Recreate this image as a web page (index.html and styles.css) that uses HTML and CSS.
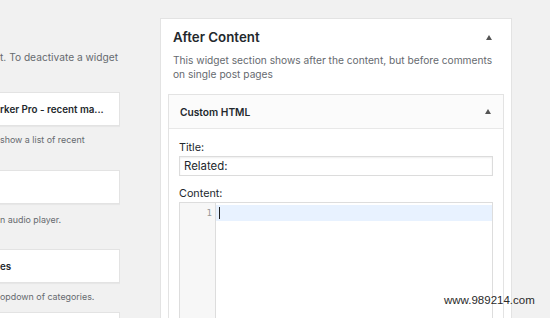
FILE: index.html
```html
<!DOCTYPE html>
<html>
<head>
  <meta charset="UTF-8">
  <title>Widgets</title>
  <link rel="stylesheet" href="styles.css">
</head>
<body>

  <div class="available">
    <p class="help">t. To deactivate a widget</p>

    <div class="widget first"><span>rker Pro - recent ma...</span></div>
    <p class="desc">show a list of recent</p>

    <div class="widget second"><span></span></div>
    <p class="desc d2">n audio player.</p>

    <div class="widget third"><span>es</span></div>
    <p class="desc">opdown of categories.</p>

    <div class="widget fourth"><span></span></div>
  </div>

  <div class="sidebar">
    <div class="sidebar-head">
      <h2>After Content</h2>
      <span class="toggle"></span>
    </div>
    <p class="sidebar-desc">
      <span>This widget section shows after the content, but before comments</span>
      <span>on single post pages</span>
    </p>

    <div class="box">
      <div class="box-head">
        <h3>Custom HTML</h3>
        <span class="toggle"></span>
      </div>
      <div class="box-body">
        <label class="field-label">Title:</label>
        <div class="input">Related:</div>

        <label class="field-label content-label">Content:</label>
        <div class="editor">
          <div class="gutter"><div class="num">1</div></div>
          <div class="code">
            <div class="line active"><span class="cursor"></span></div>
          </div>
        </div>
      </div>
    </div>
  </div>

  <div class="mark">www.989214.com</div>

</body>
</html>
```

FILE: styles.css
```css
* {
  box-sizing: border-box;
}

body {
  background-color: #f1f1f1;
  font-family: 'Inter', 'Liberation Sans', sans-serif;
  color: #23282d;
  margin: 0;
  padding: 0;
  display: flex;
  height: 318px;
  overflow: hidden;
}

/* left column - available widgets, cut off */
.available {
  width: 120px;
  flex: none;
  overflow: hidden;
  padding-top: 49px;
}

.help,
.desc {
  margin: 0;
  line-height: 16px;
  color: #666a6f;
  white-space: nowrap;
}

.help {
  font-size: 10.2px;
}

.desc {
  font-size: 8.9px;
  margin-top: 6px;
}

.d2 { margin-top: 8px; }

.widget {
  height: 34px;
  background-color: white;
  border: 1px solid #e3e3e3;
  border-left: none;
  box-shadow: 0 1px 1px rgba(0,0,0,0.04);
  display: flex;
  align-items: center;
  font-size: 9.8px;
  font-weight: 600;
  white-space: nowrap;
}

.first { margin-top: 27px; }
.second { margin-top: 22px; }
.third { margin-top: 21px; }
.fourth { margin-top: 7px; }

/* right column - sidebar */
.sidebar {
  width: 352px;
  flex: none;
  margin-left: 40px;
  margin-top: 18px;
  background-color: white;
  border: 1px solid #e3e3e3;
  border-bottom: none;
  padding: 8px 7px 0;
}

.sidebar-head {
  display: flex;
  justify-content: space-between;
  align-items: center;
  padding: 0 12px 0 5px;
}

.sidebar-head h2 {
  margin: 0;
  font-size: 13.3px;
  font-weight: 600;
  line-height: 20px;
}

.toggle {
  width: 0;
  height: 0;
  border-left: 3.5px solid transparent;
  border-right: 3.5px solid transparent;
  border-bottom: 5px solid #555;
}

.sidebar-desc {
  margin: 6px 0 0;
  padding: 0 5px;
  font-size: 10.2px;
  line-height: 14px;
  color: #666a6f;
}

.sidebar-desc span {
  display: block;
  white-space: nowrap;
}

.box {
  margin-top: 13px;
  border: 1px solid #e3e3e3;
  border-bottom: none;
}

.box-head {
  height: 34px;
  background-color: #fbfbfb;
  border-bottom: 1px solid #e8e8e8;
  display: flex;
  justify-content: space-between;
  align-items: center;
  padding: 0 12px 0 11px;
}

.box-head h3 {
  margin: 0;
  font-size: 10.2px;
  font-weight: 600;
}

.box-body {
  padding: 11px 10px 0;
}

.field-label {
  display: block;
  font-size: 10.8px;
  line-height: 16px;
}

.content-label {
  margin-top: 10px;
}

.input {
  height: 20px;
  border: 1px solid #dcdcdc;
  box-shadow: inset 0 1px 2px rgba(0,0,0,0.07);
  padding: 0 4px;
  font-size: 11.4px;
  line-height: 18px;
}

.editor {
  display: flex;
  height: 160px;
  border: 1px solid #dddddd;
  border-bottom: none;
}

.gutter {
  width: 36px;
  flex: none;
  background-color: #f7f7f7;
  border-right: 1px solid #dddddd;
  padding-top: 2px;
}

.num {
  text-align: right;
  padding-right: 3px;
  font-family: 'DejaVu Sans Mono', monospace;
  font-size: 9px;
  line-height: 16px;
  color: #999;
}

.code {
  flex: 1;
  padding-top: 2px;
}

.line {
  height: 16px;
  padding-left: 3px;
  display: flex;
  align-items: center;
}

.active {
  background-color: #e8f2ff;
}

.cursor {
  width: 1px;
  height: 12px;
  background-color: #222;
}

.mark {
  position: absolute;
  left: 444px;
  top: 292px;
  font-family: 'Liberation Sans', sans-serif;
  font-size: 11.5px;
  line-height: 16px;
  color: #2a2a2a;
}
```
